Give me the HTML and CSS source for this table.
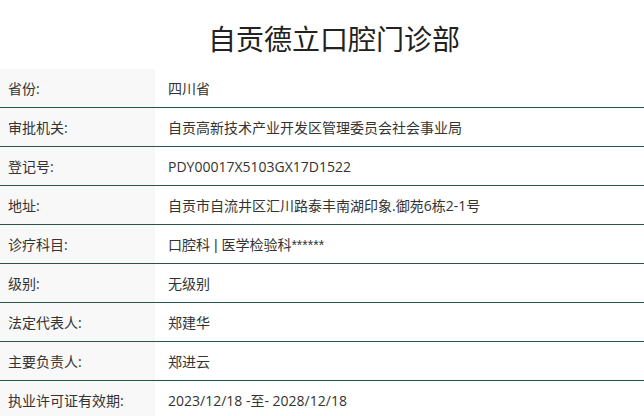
FILE: index.html
```html
<!DOCTYPE html>
<html lang="zh-CN">
<head>
<meta charset="utf-8">
<link rel="stylesheet" href="styles.css">
</head>
<body>
<h1 class="title">自贡德立口腔门诊部</h1>
<div class="table">
  <div class="row"><div class="label">省份:</div><div class="value">四川省</div></div>
  <div class="row"><div class="label">审批机关:</div><div class="value">自贡高新技术产业开发区管理委员会社会事业局</div></div>
  <div class="row"><div class="label">登记号:</div><div class="value">PDY00017X5103GX17D1522</div></div>
  <div class="row"><div class="label">地址:</div><div class="value">自贡市自流井区汇川路泰丰南湖印象.御苑6栋2-1号</div></div>
  <div class="row"><div class="label">诊疗科目:</div><div class="value"><span>口腔科<span class="narrow"> | </span>医学检验科<span class="narrow">******</span></span></div></div>
  <div class="row"><div class="label">级别:</div><div class="value">无级别</div></div>
  <div class="row"><div class="label">法定代表人:</div><div class="value">郑建华</div></div>
  <div class="row"><div class="label">主要负责人:</div><div class="value">郑进云</div></div>
  <div class="row"><div class="label">执业许可证有效期:</div><div class="value">2023/12/18 -至- 2028/12/18</div></div>
</div>
</body>
</html>
```
FILE: styles.css
```css
html, body {
  margin: 0;
  padding: 0;
  background: #fff;
}
body {
  font-family: "Open Sans", "Noto Sans CJK SC", sans-serif;
  color: #333;
}
.title {
  margin: 0;
  height: 69px;
  line-height: 76px;
  font-size: 28px;
  font-weight: normal;
  text-align: center;
  padding-left: 24px;
  color: #222;
  font-family: "Noto Sans CJK SC", sans-serif;
}
.table {
  display: flex;
  flex-direction: column;
}
.row {
  display: flex;
  height: 38px;
  border-bottom: 1px solid #2b5545;
  font-size: 14px;
}
.label {
  width: 147px;
  padding-left: 8px;
  background: #f8f8f8;
  display: flex;
  align-items: center;
}
.value {
  flex: 1;
  padding-left: 13px;
  display: flex;
  align-items: center;
  white-space: pre;
}
.narrow {
  font-family: "Liberation Sans", sans-serif;
}
```
